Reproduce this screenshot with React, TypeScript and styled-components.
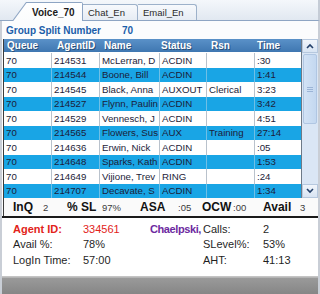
import React from "react";
import styled, { createGlobalStyle } from "styled-components";

const Global = createGlobalStyle`
  html, body { margin: 0; padding: 0; background: #ffffff; }
  * { box-sizing: border-box; }
`;

const Frame = styled.div`
  width: 320px;
  height: 294px;
  overflow: hidden;
  display: flex;
  flex-direction: column;
  font-family: "Liberation Sans", Arial, sans-serif;
  background: #fbfcfd;
`;

const TabStrip = styled.div`
  height: 21px;
  flex: none;
  display: flex;
  align-items: flex-end;
  padding-left: 12px;
  background: linear-gradient(#f4f7fb, #e1e8f1);
  border-bottom: 1px solid #8ea5c3;
  border-right: 2px solid #c5ccd6;
`;

const ActiveTabOuter = styled.div`
  width: 71px;
  height: 19px;
  margin-bottom: -1px;
  padding: 1px 1px 0 1px;
  background: #8ea5c3;
  clip-path: polygon(14px 0, 100% 0, 100% 100%, 0 100%);
  border-top-right-radius: 2px;
  position: relative;
  z-index: 1;
`;

const ActiveTabInner = styled.div`
  height: 100%;
  display: flex;
  align-items: center;
  padding-left: 19px;
  background: linear-gradient(#ffffff, #fbfcfd);
  clip-path: polygon(13.5px 0, 100% 0, 100% 100%, 0.3px 100%);
  font-size: 10px;
  font-weight: bold;
  color: #1a1a1a;
`;

const Tab = styled.div<{ $w: number }>`
  width: ${(p) => p.$w}px;
  height: 16px;
  display: flex;
  align-items: center;
  padding-left: 5px;
  font-size: 9.5px;
  color: #2a2a2a;
  background: linear-gradient(#f7f9fc, #e6ecf4);
  border: 1px solid #9db1ca;
  border-left: none;
  border-bottom: none;
  border-top-right-radius: 3px;
`;

const Body = styled.div`
  flex: 1;
  display: flex;
  flex-direction: column;
  border-left: 2px solid #c9ced6;
  border-right: 2px solid #c9ced6;
`;

const GroupLine = styled.div`
  height: 18px;
  flex: none;
  display: flex;
  align-items: center;
  padding-left: 4px;
  font-size: 10px;
  font-weight: bold;
  color: #1b5ea9;
`;

const GroupValue = styled.span`
  margin-left: 21px;
`;

const Region = styled.div`
  margin-left: 1px;
  border-left: 1px solid #3c3c3c;
  display: flex;
  flex-direction: column;
`;

const GridWrap = styled.div`
  display: flex;
`;

const Table = styled.div`
  width: 298px;
  border-right: 1px solid #6d7a88;
  display: grid;
  grid-template-columns: 48px 48px 60px 47px 48px 46px;
  grid-template-rows: 14px;
  grid-auto-rows: 14.5px;
`;

const HeadCell = styled.div<{ $pl: number }>`
  display: flex;
  align-items: center;
  padding-left: ${(p) => p.$pl}px;
  background: linear-gradient(#5a91c8, #3f77b1);
  color: #ffffff;
  font-size: 10px;
  font-weight: bold;
  text-shadow: 1px 1px 0 #2a4f78;
  border-bottom: 1px solid #ffffff;
`;

const Cell = styled.div<{ $alt: boolean }>`
  display: flex;
  align-items: center;
  padding-left: 2px;
  background: ${(p) => (p.$alt ? "#19a5e5" : "#ffffff")};
  color: #1c1c38;
  font-size: 9.7px;
  white-space: nowrap;
  overflow: hidden;
  border-right: 1px solid ${(p) => (p.$alt ? "#6fbfe6" : "#b9c2cc")};
  &:nth-child(6n) { border-right: none; }
`;

const Scrollbar = styled.div`
  width: 16px;
  display: flex;
  flex-direction: column;
  background: #dae6f5;
`;

const ScrollButton = styled.div`
  height: 14px;
  flex: none;
  display: flex;
  align-items: center;
  justify-content: center;
  background: linear-gradient(#f1f5fb, #d8e4f3);
  border: 1px solid #b6c8de;
`;

const Track = styled.div`
  flex: 1;
  display: flex;
  flex-direction: column;
  padding: 1px 1px;
`;

const Thumb = styled.div`
  height: 70px;
  flex: none;
  display: flex;
  align-items: center;
  justify-content: center;
  background: linear-gradient(90deg, #d2e2f5, #c4d8f0);
  border: 1px solid #b0c6e2;
  border-radius: 2px;
`;

const Grip = styled.div`
  width: 6px;
  height: 5px;
  border-top: 1px solid #9bb4d6;
  border-bottom: 1px solid #9bb4d6;
  position: relative;
  &::after {
    content: "";
    position: absolute;
    left: 0;
    right: 0;
    top: 1px;
    border-top: 1px solid #9bb4d6;
  }
`;

const StatsRow = styled.div`
  height: 18px;
  display: grid;
  grid-template-columns: 30px 24px 35px 38px 38px 24px 31px 30px 37px auto;
  align-items: center;
  padding-left: 9px;
  background: #fafafa;
`;

const StatLabel = styled.span`
  font-size: 12px;
  font-weight: bold;
  color: #111111;
`;

const StatValue = styled.span`
  font-size: 9.5px;
  color: #3a3a3a;
`;

const Divider = styled.div`
  height: 2px;
  flex: none;
  background: #1a1a1a;
`;

const Agent = styled.div`
  height: 59px;
  flex: none;
  display: grid;
  grid-template-columns: 70px 67px 53px 60px auto;
  grid-auto-rows: 15.5px;
  align-content: start;
  padding: 3px 0 0 11px;
  background: #ffffff;
  border-bottom: 1px solid #c4c4c4;
`;

const AgentText = styled.span<{ $tone?: "red" | "purple"; $bold?: boolean }>`
  display: flex;
  align-items: center;
  font-size: 11px;
  white-space: nowrap;
  font-weight: ${(p) => (p.$bold ? "bold" : "normal")};
  letter-spacing: ${(p) => (p.$tone === "purple" ? "-0.4px" : "0")};
  color: ${(p) =>
    p.$tone === "red" ? "#e2231a" : p.$tone === "purple" ? "#6d2aa0" : "#1f1f1f"};
`;

const BottomBar = styled.div`
  flex: 1;
  background: linear-gradient(#9a9a9a, #868686);
  border-top: 1px solid #b5b5b5;
`;

const rows = [
  ["70", "214531", "McLerran, D", "ACDIN", "", ":30"],
  ["70", "214544", "Boone, Bill", "ACDIN", "", "1:41"],
  ["70", "214545", "Black, Anna", "AUXOUT", "Clerical", "3:23"],
  ["70", "214527", "Flynn, Paulin", "ACDIN", "", "3:42"],
  ["70", "214529", "Vennesch, J", "ACDIN", "", "4:51"],
  ["70", "214565", "Flowers, Sus", "AUX", "Training", "27:14"],
  ["70", "214636", "Erwin, Nick", "ACDIN", "", ":05"],
  ["70", "214648", "Sparks, Kath", "ACDIN", "", "1:53"],
  ["70", "214649", "Vijione, Trev", "RING", "", ":24"],
  ["70", "214707", "Decavate, S", "ACDIN", "", "1:34"],
];

const headers: [string, number][] = [
  ["Queue", 3],
  ["AgentID", 5],
  ["Name", 4],
  ["Status", 1],
  ["Rsn", 4],
  ["Time", 2],
];

const Chevron = ({ up }: { up: boolean }) => (
  <svg width="8" height="6" viewBox="0 0 8 6">
    <path
      d={up ? "M1 5 L4 2 L7 5" : "M1 1 L4 4 L7 1"}
      fill="none"
      stroke="#24406a"
      strokeWidth="1.6"
    />
  </svg>
);

export default function App() {
  return (
    <Frame>
      <Global />
      <TabStrip>
        <ActiveTabOuter>
          <ActiveTabInner>Voice_70</ActiveTabInner>
        </ActiveTabOuter>
        <Tab $w={55}>Chat_En</Tab>
        <Tab $w={59}>Email_En</Tab>
      </TabStrip>
      <Body>
        <GroupLine>
          Group Split Number<GroupValue>70</GroupValue>
        </GroupLine>
        <Region>
          <GridWrap>
            <Table>
              {headers.map(([h, pl]) => (
                <HeadCell key={h} $pl={pl}>
                  {h}
                </HeadCell>
              ))}
              {rows.map((r, i) =>
                r.map((c, j) => (
                  <Cell key={`${i}-${j}`} $alt={i % 2 === 1}>
                    {c}
                  </Cell>
                ))
              )}
            </Table>
            <Scrollbar>
              <ScrollButton>
                <Chevron up />
              </ScrollButton>
              <Track>
                <Thumb>
                  <Grip />
                </Thumb>
              </Track>
              <ScrollButton>
                <Chevron up={false} />
              </ScrollButton>
            </Scrollbar>
          </GridWrap>
          <StatsRow>
            <StatLabel>InQ</StatLabel>
            <StatValue>2</StatValue>
            <StatLabel>% SL</StatLabel>
            <StatValue>97%</StatValue>
            <StatLabel>ASA</StatLabel>
            <StatValue>:05</StatValue>
            <StatLabel>OCW</StatLabel>
            <StatValue>:00</StatValue>
            <StatLabel>Avail</StatLabel>
            <StatValue>3</StatValue>
          </StatsRow>
        </Region>
        <Divider />
        <Agent>
          <AgentText $tone="red" $bold>Agent ID:</AgentText>
          <AgentText $tone="red">334561</AgentText>
          <AgentText $tone="purple" $bold>Chaelpski,</AgentText>
          <AgentText>Calls:</AgentText>
          <AgentText>2</AgentText>
          <AgentText>Avail %:</AgentText>
          <AgentText>78%</AgentText>
          <AgentText />
          <AgentText>SLevel%:</AgentText>
          <AgentText>53%</AgentText>
          <AgentText>LogIn Time:</AgentText>
          <AgentText>57:00</AgentText>
          <AgentText />
          <AgentText>AHT:</AgentText>
          <AgentText>41:13</AgentText>
        </Agent>
        <BottomBar />
      </Body>
    </Frame>
  );
}
